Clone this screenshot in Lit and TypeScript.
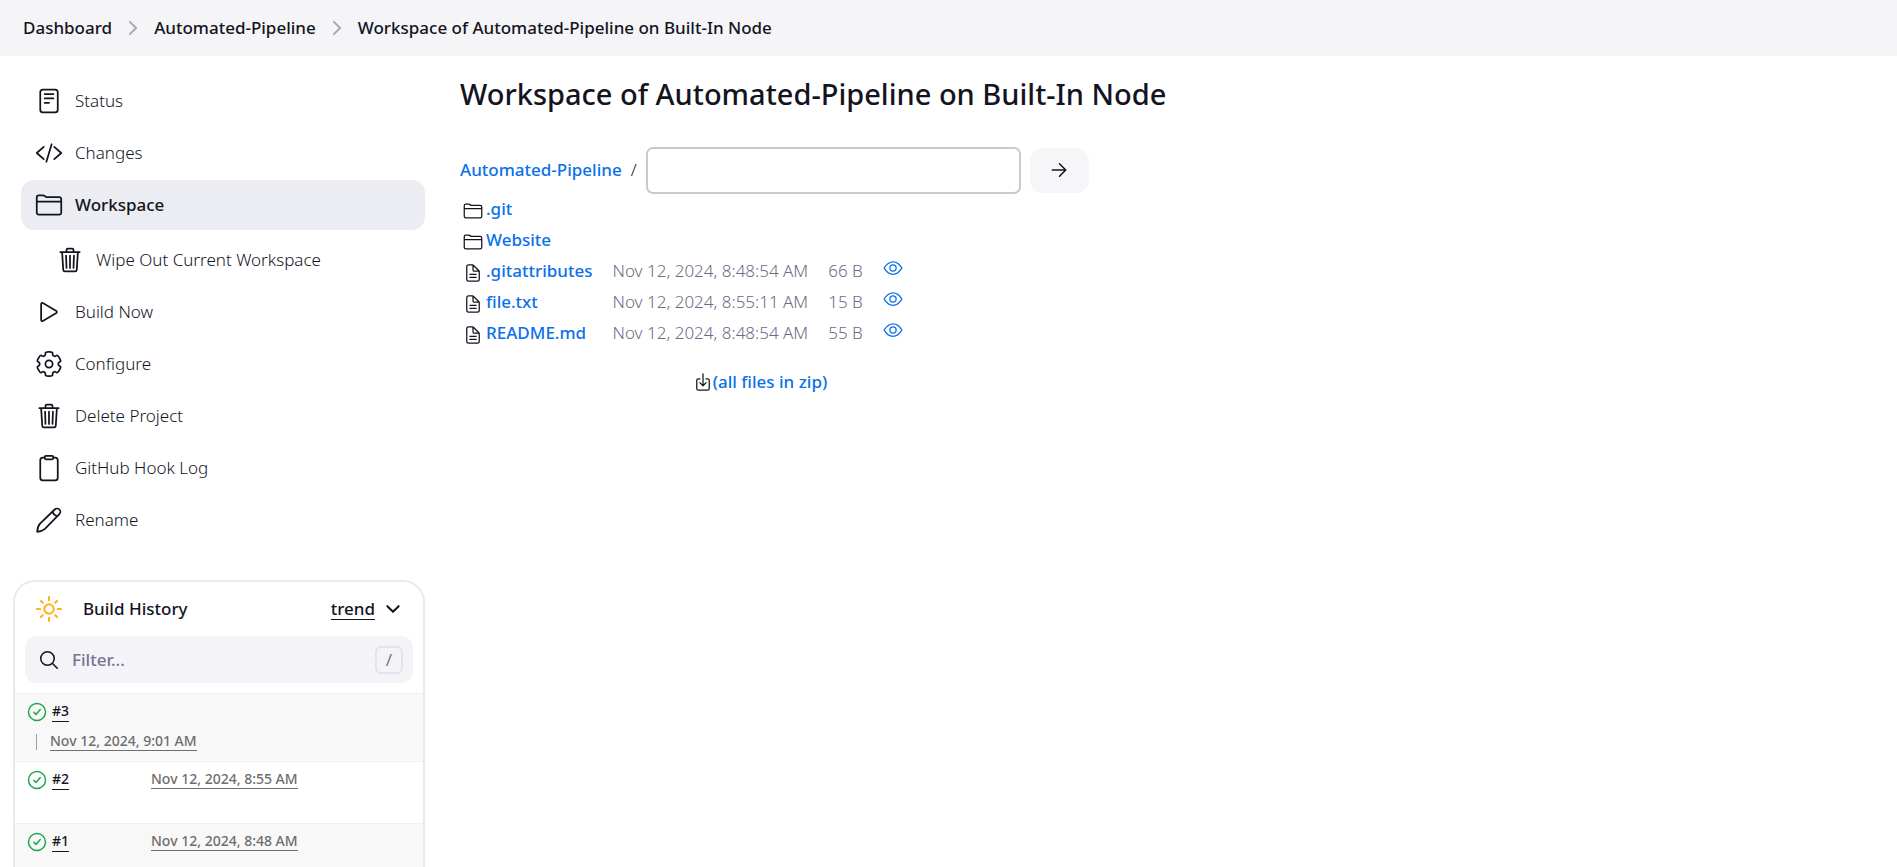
import { LitElement, html, svg, css, nothing } from "lit";
import { customElement } from "lit/decorators.js";
import { classMap } from "lit/directives/class-map.js";

/** Outline of a six-lobed gear with softened corners, on a 512 unit grid. */
function gearPath(): string {
  const points: number[][] = [];
  const at = (deg: number, r: number) => {
    const a = (deg * Math.PI) / 180;
    points.push([256 + r * Math.sin(a), 256 - r * Math.cos(a)]);
  };
  for (let lobe = 0; lobe < 360; lobe += 60) {
    at(lobe - 17, 230);
    at(lobe + 17, 230);
    at(lobe + 22, 172);
    at(lobe + 38, 172);
  }
  const mix = (a: number[], b: number[], t: number) =>
    [a[0] + (b[0] - a[0]) * t, a[1] + (b[1] - a[1]) * t].map((v) => v.toFixed(1)).join(" ");
  return (
    points
      .map((p, i) => {
        const before = points[(i + points.length - 1) % points.length];
        const after = points[(i + 1) % points.length];
        return `${i ? "L" : "M"}${mix(p, before, 0.4)}Q${mix(p, p, 0)} ${mix(p, after, 0.4)}`;
      })
      .join("") + "Z"
  );
}

const ICONS = {
  status: svg`<rect x="96" y="48" width="320" height="416" rx="48"/><path d="M176 128h160M176 208h160M176 288h80"/>`,
  changes: svg`<path d="M160 368L32 256l128-112M352 368l128-112-128-112M304 96l-96 320"/>`,
  folder: svg`<path d="M440 432H72a40 40 0 01-40-40V120a40 40 0 0140-40h75.89a40 40 0 0122.19 6.72l27.84 18.56a40 40 0 0022.19 6.72H440a40 40 0 0140 40v240a40 40 0 01-40 40zM32 192h448"/>`,
  trash: svg`<path d="M112 112l20 320c.95 18.49 14.4 32 32 32h184c17.67 0 30.87-13.51 32-32l20-320M80 112h352M192 112V72a24 24 0 0124-24h80a24 24 0 0124 24v40M256 176v224M184 176l8 224M328 176l-8 224"/>`,
  play: svg`<path d="M112 111v290c0 17.44 17 28.52 31 20.16l247.9-148.37c12.12-7.25 12.12-26.33 0-33.58L143 90.84c-14-8.36-31 2.72-31 20.16z"/>`,
  settings: svg`<path d=${gearPath()}/><circle cx="256" cy="256" r="66"/>`,
  clipboard: svg`<path d="M336 64h32a48 48 0 0148 48v320a48 48 0 01-48 48H144a48 48 0 01-48-48V112a48 48 0 0148-48h32"/><rect x="176" y="32" width="160" height="64" rx="26"/>`,
  pencil: svg`<path d="M40 472c4-62 18-112 52-148L360 64a60 60 0 0186 86L182 420c-38 34-84 48-142 52zM326 98c6 48 36 78 86 86"/>`,
  sun: svg`<path d="M256 36v60M256 416v60M403.5 108.5l-34 34M142.5 369.5l-34 34M476 256h-60M96 256H36M403.5 403.5l-34-34M142.5 142.5l-34-34"/><circle cx="256" cy="256" r="86"/>`,
  search: svg`<path d="M221.09 64a157.09 157.09 0 10157.09 157.09A157.1 157.1 0 00221.09 64zM338.29 338.29L448 448"/>`,
  chevronDown: svg`<path d="M112 184l144 144 144-144"/>`,
  chevronRight: svg`<path d="M184 112l144 144-144 144"/>`,
  success: svg`<circle cx="256" cy="256" r="218"/><path d="M340 192L230 318l-56-56"/>`,
  document: svg`<path d="M416 221.25V416a48 48 0 01-48 48H144a48 48 0 01-48-48V96a48 48 0 0148-48h98.75a32 32 0 0122.62 9.37l141.26 141.26a32 32 0 019.37 22.62zM256 56v120a32 32 0 0032 32h120M176 288h160M176 368h160"/>`,
  eye: svg`<path d="M255.66 96C177 96 98 148 34.83 245a18 18 0 000 20C83 347 162 416 255.66 416c92.84 0 173.34-69 221.79-151a18 18 0 000-18C428.89 162 347.8 96 255.66 96z"/><circle cx="256" cy="256" r="80"/>`,
  download: svg`<path d="M336 176h40a40 40 0 0140 40v208a40 40 0 01-40 40H136a40 40 0 01-40-40V216a40 40 0 0140-40h40M176 272l80 80 80-80M256 48v288"/>`,
  arrow: svg`<path d="M268 112l144 144-144 144M392 256H100"/>`,
};

type IconName = keyof typeof ICONS;

const icon = (name: IconName, extra = "") =>
  html`<svg class="icon ${extra}" viewBox="0 0 512 512" aria-hidden="true">${ICONS[name]}</svg>`;

const shared = css`
  * {
    box-sizing: border-box;
  }
  a {
    color: inherit;
    text-decoration: none;
  }
  button,
  input {
    font: inherit;
    color: inherit;
    margin: 0;
  }
  .icon {
    display: block;
    flex: none;
    width: 28px;
    height: 28px;
    fill: none;
    stroke: currentColor;
    stroke-width: 32;
    stroke-linecap: round;
    stroke-linejoin: round;
  }
`;

const TITLE = "Workspace of Automated-Pipeline on Built-In Node";

@customElement("bread-crumbs")
export class BreadCrumbs extends LitElement {
  static styles = [
    shared,
    css`
      :host {
        display: block;
        background: #f5f5f8;
      }
      .list {
        display: flex;
        align-items: center;
        margin: 0;
        padding: 0 23px;
        height: 56px;
        list-style: none;
        font-weight: 500;
      }
      .item {
        display: flex;
        align-items: center;
        white-space: nowrap;
      }
      .icon {
        width: 22px;
        height: 22px;
        margin: 0 10px;
        color: #a7a7bb;
        stroke-width: 44;
      }
    `,
  ];

  render() {
    return html`<nav aria-label="Breadcrumb">
      <ol class="list">
        ${["Dashboard", "Automated-Pipeline", TITLE].map(
          (label, i) => html`<li class="item">${i ? icon("chevronRight") : nothing}<a href="#">${label}</a></li>`,
        )}
      </ol>
    </nav>`;
  }
}

interface Task {
  label: string;
  icon: IconName;
  active?: boolean;
  nested?: boolean;
}

const TASKS: Task[] = [
  { label: "Status", icon: "status" },
  { label: "Changes", icon: "changes" },
  { label: "Workspace", icon: "folder", active: true },
  { label: "Wipe Out Current Workspace", icon: "trash", nested: true },
  { label: "Build Now", icon: "play" },
  { label: "Configure", icon: "settings" },
  { label: "Delete Project", icon: "trash" },
  { label: "GitHub Hook Log", icon: "clipboard" },
  { label: "Rename", icon: "pencil" },
];

@customElement("task-list")
export class TaskList extends LitElement {
  static styles = [
    shared,
    css`
      :host {
        display: block;
      }
      .tasks {
        display: flex;
        flex-direction: column;
        gap: 2px;
        padding-left: 8px;
      }
      .task {
        display: flex;
        align-items: center;
        gap: 12px;
        height: 50px;
        padding: 0 14px;
        border-radius: 13px;
        font-weight: 350;
        white-space: nowrap;
      }
      .active {
        background: #ecedf3;
        font-weight: 500;
      }
      .nested {
        margin: 3px 0 0 21px;
      }
    `,
  ];

  render() {
    return html`<nav class="tasks" aria-label="Project">
      ${TASKS.map(
        (t) => html`<a href="#" class=${classMap({ task: true, active: !!t.active, nested: !!t.nested })}
          >${icon(t.icon)}<span>${t.label}</span></a
        >`,
      )}
    </nav>`;
  }
}

const BUILDS = [
  { id: "#3", date: "Nov 12, 2024, 9:01 AM", wrapped: true },
  { id: "#2", date: "Nov 12, 2024, 8:55 AM", wrapped: false },
  { id: "#1", date: "Nov 12, 2024, 8:48 AM", wrapped: false },
];

@customElement("build-history")
export class BuildHistory extends LitElement {
  static styles = [
    shared,
    css`
      :host {
        display: block;
      }
      .card {
        border: 2px solid #e9e9f2;
        border-radius: 22px;
        overflow: hidden;
      }
      .head {
        display: flex;
        align-items: center;
        height: 54px;
        padding: 0 20px;
        font-weight: 500;
      }
      .title {
        flex: 1;
        margin: 0 0 0 20px;
        font-size: inherit;
        font-weight: inherit;
      }
      .sun {
        color: #ffb11f;
        stroke-width: 38;
      }
      .underlined {
        border-bottom: 1px solid currentColor;
      }
      .trend {
        line-height: 20px;
      }
      .toggle {
        display: flex;
        margin-left: 8px;
        padding: 0;
        border: 0;
        background: none;
      }
      .toggle .icon {
        width: 20px;
        height: 20px;
        stroke-width: 52;
      }
      .filter {
        display: flex;
        align-items: center;
        height: 47px;
        margin: 0 10px 10px;
        padding: 0 10px 0 13px;
        border-radius: 12px;
        background: #f3f3f8;
      }
      .filter .icon {
        width: 22px;
        height: 22px;
        stroke-width: 36;
      }
      .field {
        flex: 1;
        min-width: 0;
        padding: 0 12px;
        border: 0;
        outline: 0;
        background: none;
        font-weight: 500;
      }
      .field::placeholder {
        color: #77758f;
        opacity: 1;
      }
      .key {
        width: 28px;
        height: 28px;
        border: 2px solid #e3e3ee;
        border-radius: 6px;
        color: #77758f;
        font-family: inherit;
        font-size: 17px;
        line-height: 23px;
        text-align: center;
      }
      .builds {
        margin: 0;
        padding: 0;
        list-style: none;
      }
      .build {
        display: grid;
        grid-template-columns: 124px 1fr;
        align-items: start;
        min-height: 62px;
        padding: 8px 12px;
        border-top: 1px solid #f0f0f2;
        font-size: 14px;
        font-weight: 500;
        line-height: 18px;
      }
      .build:nth-child(odd) {
        background: #f8f8f8;
      }
      .build > * {
        justify-self: start;
      }
      .wrapped {
        grid-template-columns: 1fr;
        row-gap: 8px;
        min-height: 68px;
      }
      .number {
        display: flex;
        gap: 5px;
      }
      .number .icon {
        width: 20px;
        height: 20px;
        color: #1ea64b;
        stroke-width: 38;
      }
      .date {
        color: #6e6e6e;
      }
      .stem {
        display: flex;
        align-items: center;
        gap: 13px;
        padding-left: 9px;
      }
      .stem::before {
        content: "";
        width: 1px;
        height: 16px;
        background: #8fa3b3;
      }
    `,
  ];

  render() {
    return html`<section class="card">
      <header class="head">
        ${icon("sun", "sun")}
        <h2 class="title">Build History</h2>
        <a class="underlined trend" href="#">trend</a>
        <button class="toggle" aria-label="Collapse build history">${icon("chevronDown")}</button>
      </header>
      <label class="filter">
        ${icon("search")}
        <input class="field" type="search" placeholder="Filter..." aria-label="Filter builds" />
        <kbd class="key">/</kbd>
      </label>
      <ul class="builds">
        ${BUILDS.map((b) => {
          const date = html`<a class="underlined date" href="#">${b.date}</a>`;
          return html`<li class=${classMap({ build: true, wrapped: b.wrapped })}>
            <span class="number">${icon("success")}<a class="underlined" href="#">${b.id}</a></span>
            ${b.wrapped ? html`<span class="stem">${date}</span>` : date}
          </li>`;
        })}
      </ul>
    </section>`;
  }
}

interface Entry {
  name: string;
  date?: string;
  size?: string;
}

const ENTRIES: Entry[] = [
  { name: ".git" },
  { name: "Website" },
  { name: ".gitattributes", date: "Nov 12, 2024, 8:48:54 AM", size: "66 B" },
  { name: "file.txt", date: "Nov 12, 2024, 8:55:11 AM", size: "15 B" },
  { name: "README.md", date: "Nov 12, 2024, 8:48:54 AM", size: "55 B" },
];

@customElement("workspace-browser")
export class WorkspaceBrowser extends LitElement {
  static styles = [
    shared,
    css`
      :host {
        display: block;
      }
      .title {
        margin: 0 0 34px;
        font-size: 29px;
        font-weight: 500;
        line-height: 36px;
      }
      .path {
        display: flex;
        align-items: center;
        gap: 9px;
        height: 48px;
      }
      .link {
        color: #0b70ea;
        font-weight: 500;
      }
      .slash {
        font-weight: 350;
      }
      .input {
        width: 375px;
        height: 47px;
        padding: 0 10px;
        border: 2px solid #c3cdd1;
        border-radius: 7px;
        background: #fff;
      }
      .go {
        display: grid;
        place-items: center;
        width: 59px;
        height: 45px;
        padding: 0;
        border: 0;
        border-radius: 13px;
        background: #f6f6f9;
      }
      .go .icon {
        width: 22px;
        height: 22px;
        stroke-width: 36;
      }
      .files {
        width: 600px;
        border-collapse: collapse;
      }
      .files td {
        height: 31px;
        padding: 0 20px 0 0;
        line-height: 30px;
        vertical-align: top;
        white-space: nowrap;
      }
      .files .icon {
        width: 20px;
        height: 20px;
      }
      .files .kind {
        width: 26px;
        padding: 7px 3px 0 3px;
      }
      .muted {
        color: #6c6a84;
        font-weight: 350;
      }
      .files .view {
        width: 100%;
        padding: 1px 0 0;
      }
      .view .link {
        display: inline-block;
      }
      .files .all {
        padding: 18px 0 0;
      }
      .zip {
        display: flex;
        align-items: center;
        justify-content: center;
      }
    `,
  ];

  render() {
    return html`<h1 class="title">${TITLE}</h1>
      <form class="path" @submit=${(e: Event) => e.preventDefault()}>
        <a class="link" href="#">Automated-Pipeline</a>
        <span class="slash">/</span>
        <input class="input" type="text" aria-label="Path" />
        <button class="go" aria-label="Go">${icon("arrow")}</button>
      </form>
      <table class="files">
        <tbody>
          ${ENTRIES.map(
            (e) => html`<tr>
              <td class="kind">${icon(e.date ? "document" : "folder")}</td>
              <td><a class="link" href="#">${e.name}</a></td>
              <td class="muted">${e.date}</td>
              <td class="muted">${e.size}</td>
              <td class="view">
                ${e.date ? html`<a class="link" href="#" aria-label="View ${e.name}">${icon("eye")}</a>` : nothing}
              </td>
            </tr>`,
          )}
          <tr>
            <td class="all" colspan="5">
              <span class="zip">${icon("download")}<a class="link" href="#">(all files in zip)</a></span>
            </td>
          </tr>
        </tbody>
      </table>`;
  }
}

@customElement("app-root")
export class AppRoot extends LitElement {
  static styles = css`
    :host {
      display: flex;
      flex-direction: column;
      height: 100vh;
      background: #fff;
      color: #14141f;
      font-family: "Noto Sans", "Open Sans", sans-serif;
      font-size: 17px;
      line-height: 24px;
    }
    .page {
      flex: 1;
      min-height: 0;
      display: grid;
      grid-template-columns: 412px minmax(0, 1fr);
      column-gap: 35px;
      padding: 20px 35px 0 13px;
      overflow-y: auto;
      scrollbar-width: none;
    }
    .side {
      display: flex;
      flex-direction: column;
      gap: 35px;
    }
  `;

  render() {
    return html`<bread-crumbs></bread-crumbs>
      <div class="page">
        <aside class="side">
          <task-list></task-list>
          <build-history></build-history>
        </aside>
        <main><workspace-browser></workspace-browser></main>
      </div>`;
  }
}
